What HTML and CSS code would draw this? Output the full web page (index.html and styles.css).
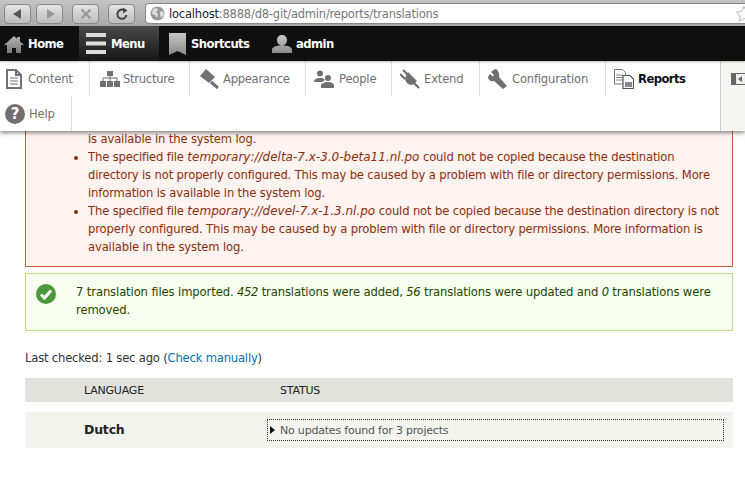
FILE: index.html
```html
<!DOCTYPE html>
<html lang="en">
<head>
  <meta charset="UTF-8" />
  <title>Translations</title>
  <link rel="stylesheet" href="styles.css">
</head>
<body>

<div class="browser">
  <div class="btn"><svg width="14" height="14" viewBox="0 0 14 14"><path d="M10 2v10L2 7z" fill="#555"/></svg></div>
  <div class="btn btn-next"><svg width="14" height="14" viewBox="0 0 14 14"><path d="M4 2v10l8-5z" fill="#999"/></svg></div>
  <div class="btn btn-stop"><svg width="14" height="14" viewBox="0 0 14 14"><path d="M2.500 2.500l9 9M11.500 2.500l-9 9" stroke="#999" stroke-width="2.400"/></svg></div>
  <div class="btn"><svg width="14" height="14" viewBox="0 0 14 14"><path d="M11.500 8a4.600 4.600 0 1 1-2-4.600" fill="none" stroke="#444" stroke-width="2"/><path d="M8 .5l4.500 3-4.500 3z" fill="#444"/></svg></div>
  <div class="address">
    <svg width="15" height="15" viewBox="0 0 15 15"><circle cx="7.500" cy="7.500" r="7" fill="#999"/><path d="M3 3l4-1 1 2-2 2 2 2-1 4-2-3-3-1zM10 6l3-1 1 4-3 3-1-3z" fill="#ddd"/></svg>
    <span class="host">localhost</span><span class="path">:8888/d8-git/admin/reports/translations</span>
    <svg class="star" width="18" height="18" viewBox="0 0 18 18"><path d="M9 1.500l2.300 5 5.400.6-4 3.700 1.100 5.400L9 13.500l-4.800 2.700 1.100-5.400-4-3.700 5.400-.6z" fill="#fff" stroke="#bbb"/></svg>
  </div>
</div>

<div class="toolbar">
  <a class="bar-item bar-home">
    <svg width="20" height="18" viewBox="0 0 20 18">
      <linearGradient id="g-home" x1="0" y1="0" x2="0" y2="1"><stop offset="0" stop-color="#b0b0b0"/><stop offset="1" stop-color="#7c7c7c"/></linearGradient>
      <path d="M10 1L0 10h3v8h5v-5h4v5h5v-8h3l-4-3.600V2h-3v1.700z" fill="url(#g-home)"/>
    </svg>
    Home
  </a>
  <a class="bar-item bar-menu">
    <svg width="20" height="21" viewBox="0 0 20 21"><path d="M0 0h20v4H0zM0 8.500h20v4H0zM0 17h20v4H0z" fill="#dedede"/></svg>
    Menu
  </a>
  <a class="bar-item bar-shortcuts">
    <svg width="17" height="22" viewBox="0 0 17 22">
      <linearGradient id="g-mark" x1="0" y1="0" x2="0" y2="1"><stop offset="0" stop-color="#c4c4c4"/><stop offset="1" stop-color="#8a8a8a"/></linearGradient>
      <path d="M0 0h17v22l-8.500-4L0 22z" fill="url(#g-mark)"/>
    </svg>
    Shortcuts
  </a>
  <a class="bar-item bar-admin">
    <svg width="20" height="18" viewBox="0 0 20 18">
      <linearGradient id="g-user" x1="0" y1="0" x2="0" y2="1"><stop offset="0" stop-color="#c8c8c8"/><stop offset="1" stop-color="#8c8c8c"/></linearGradient>
      <path d="M10 0c3 0 5 2 5 5s-2 5.500-5 5.500S5 8 5 5s2-5 5-5zM0 18v-3c0-3 4-4 7-4.500h6c3 .5 7 1.500 7 4.500v3z" fill="url(#g-user)"/>
    </svg>
    admin
  </a>
</div>

<div class="tray">
  <div class="tray-items">
    <div class="tray-row">
      <a class="tab tab-content">
        <svg width="16" height="20" viewBox="0 0 16 20"><path d="M1 1h9l5 5v13H1z" fill="#fff" stroke="#707070" stroke-width="2"/><path d="M10 1v5h5" fill="none" stroke="#707070" stroke-width="2"/><path d="M4 9h8M4 12h8M4 15h8" stroke="#707070"/></svg>
        Content
      </a>
      <a class="tab tab-structure">
        <svg width="20" height="16" viewBox="0 0 20 16"><path d="M7 0h6v5H7zM0 10h6v6H0zM7 10h6v6H7zM14 10h6v6h-6z" fill="#707070"/><path d="M3 10V7h14v3M10 5v5" fill="none" stroke="#707070"/></svg>
        Structure
      </a>
      <a class="tab tab-appearance">
        <svg width="20" height="20" viewBox="0 0 20 20"><path d="M0 7L6 0l9 8-6 6z" fill="#707070"/><path d="M11 13l7 6" stroke="#707070" stroke-width="3"/></svg>
        Appearance
      </a>
      <a class="tab tab-people">
        <svg width="20" height="18" viewBox="0 0 20 18"><circle cx="6" cy="3.500" r="3" fill="#707070"/><path d="M0 12c0-3 3-4 6-4s4 .5 5 2l-3 2z" fill="#707070"/><circle cx="14" cy="8" r="3" fill="#707070"/><path d="M7 18v-2c0-3 4-4 7-4s6 1 6 4v2z" fill="#707070"/></svg>
        People
      </a>
      <a class="tab tab-extend">
        <svg width="20" height="20" viewBox="0 0 20 20"><path d="M8 3l9 9-3 3c-2 1.500-5 1-7-1s-2.500-5-1-7z" fill="#707070"/><path d="M3 1l5 5M0 5l5 5M14 14l5 5" stroke="#707070" stroke-width="2.200"/></svg>
        Extend
      </a>
      <a class="tab tab-config">
        <svg width="20" height="20" viewBox="0 0 20 20"><path d="M7 0L3 3l3 3-1 1.500L2 5 0 8c0 3 3 5 6 4l9 8 4-3-8-9c1-3-1-8-4-8z" fill="#707070"/></svg>
        Configuration
      </a>
      <a class="tab tab-reports">
        <svg width="20" height="20" viewBox="0 0 20 20"><path d="M.5.500h8l3 3V15H.5z" fill="#fff" stroke="#777"/><path d="M2 6h7M2 8.500h7M2 11h7" stroke="#888"/><path d="M9 6.500h7l3.500 3.500v9.500H9z" fill="#fff" stroke="#555" stroke-width="1.200"/><path d="M11 13h7v5h-7z" fill="#888"/></svg>
        Reports
      </a>
    </div>
    <div class="tray-row">
      <a class="tab tab-help">
        <svg width="20" height="20" viewBox="0 0 20 20"><circle cx="10" cy="10" r="10" fill="#707070"/><text x="10" y="15" text-anchor="middle" class="help-mark">?</text></svg>
        Help
      </a>
    </div>
  </div>
  <div class="tray-toggle">
    <svg width="14" height="14" viewBox="0 0 14 14"><path d="M0 1h14v12H0z" fill="#666"/><path d="M5 2h9v10H5z" fill="#eee"/><path d="M11 4v6L7 7z" fill="#666"/></svg>
  </div>
</div>

<main>
  <div class="messages messages-error">
    <ul>
      <li class="cut">is available in the system log.</li>
      <li>The specified file <em>temporary://delta-7.x-3.0-beta11.nl.po</em> could not be copied because the destination directory is not properly configured. This may be caused by a problem with file or directory permissions. More information is available in the system log.</li>
      <li>The specified file <em>temporary://devel-7.x-1.3.nl.po</em> could not be copied because the destination directory is not properly configured. This may be caused by a problem with file or directory permissions. More information is available in the system log.</li>
    </ul>
  </div>

  <div class="messages messages-status">
    <svg class="check" width="20" height="20" viewBox="0 0 20 20"><circle cx="10" cy="10" r="10" fill="#4a9a3c"/><path d="M5 10.500l3.500 3.500L15 6.500" fill="none" stroke="#fff" stroke-width="3"/></svg>
    <p>7 translation files imported. <em>452</em> translations were added, <em>56</em> translations were updated and <em>0</em> translations were removed.</p>
  </div>

  <p class="checked">Last checked: 1 sec ago (<a href="#">Check manually</a>)</p>

  <div class="table-head">
    <span class="col-lang">Language</span>
    <span>Status</span>
  </div>
  <div class="table-row">
    <span class="col-lang">Dutch</span>
    <div class="status">No updates found for 3 projects</div>
  </div>
</main>

</body>
</html>
```

FILE: styles.css
```css
* { box-sizing: border-box; }
html, body {
  height: 489px;
  overflow: hidden;
}
body {
  margin: 0;
  background: white;
  font-family: "DejaVu Sans", sans-serif;
  font-size: 11.6px;
  letter-spacing: -0.2px;
  color: #333;
}

/* browser window */
.browser {
  height: 26px;
  background: linear-gradient(#c4c4c4, #a9a9a9);
  display: flex;
  align-items: center;
  padding: 1px 0 0 4px;
  gap: 5px;
}
.btn {
  width: 27px;
  height: 20px;
  border: 1px solid #888;
  border-radius: 4px;
  background: linear-gradient(#e4e4e4, #bdbdbd);
  display: flex;
  align-items: center;
  justify-content: center;
}
.btn-next { margin-right: 4px; }
.btn-stop { margin-right: 4px; }
.address {
  flex: 1;
  height: 21px;
  margin-left: 5px;
  background: white;
  border: 1px solid #888;
  border-right: none;
  border-radius: 4px 0 0 4px;
  display: flex;
  align-items: center;
  padding-left: 4px;
  font-size: 11.5px;
  white-space: nowrap;
}
.host {
  margin-left: 4px;
  color: #222;
}
.path { color: #777; }
.star { margin-left: auto; margin-right: -8px; }

/* toolbar */
.toolbar {
  height: 35px;
  background: #0f0f0f;
  display: flex;
  position: relative;
  z-index: 1;
  box-shadow: 0 1px 2px rgba(0,0,0,0.25);
}
.bar-item {
  display: flex;
  align-items: center;
  gap: 5px;
  color: white;
  font-size: 11.6px;
  letter-spacing: -0.55px;
  font-weight: bold;
}
.bar-home { width: 79px; padding-left: 4px; gap: 4px; }
.bar-menu {
  width: 80px;
  padding-left: 7px;
  background: linear-gradient(#4a4a4a, #161616);
}
.bar-shortcuts { width: 103px; padding-left: 10px; }
.bar-admin { padding-left: 10px; gap: 4px; }

/* tray */
.tray {
  height: 70px;
  display: flex;
  background: white;
  position: relative;
  box-shadow: 0 2px 4px rgba(0,0,0,0.45);
}
.tray-items { width: 722px; }
.tray-row {
  height: 35px;
  display: flex;
}
.tab {
  display: flex;
  align-items: center;
  gap: 4px;
  height: 35px;
  padding-left: 10px;
  border-right: 1px solid #ddd;
  color: #707070;
  white-space: nowrap;
}
.tab-content { width: 90px; padding-left: 6px; gap: 6px; }
.tab-structure { width: 100px; gap: 3px; letter-spacing: -0.3px; }
.tab-appearance { width: 116px; gap: 3px; letter-spacing: -0.3px; }
.tab-people { width: 86px; padding-left: 8px; gap: 5px; }
.tab-extend { width: 88px; padding-left: 8px; }
.tab-config { width: 126px; padding-left: 8px; gap: 4px; }
.tab-reports {
  border-right: none;
  padding-left: 8px;
  color: #111;
  font-weight: bold;
  letter-spacing: -0.55px;
}
.tab-help { width: 72px; padding-left: 5px; gap: 4px; }
.help-mark {
  fill: white;
  font-size: 15px;
  font-weight: bold;
}
.tray-toggle {
  flex: 1;
  background: #f5f5f2;
  border-left: 1px solid #ccc;
  padding: 11px 0 0 10px;
}

/* page */
main { padding: 0 12px 0 25px; }
.messages {
  line-height: 18px;
  border: 1px solid;
}
.messages-error {
  display: flow-root;
  background: #fdf3f0;
  border-color: #c9623c;
  border-top: none;
  color: #8c2e0b;
  padding: 0 12px 10px 50px;
  height: 136px;
  letter-spacing: -0.15px;
}
.messages-error em {
  font-size: 12px;
  letter-spacing: 0;
}
.messages ul {
  margin: -1px 0 0;
  padding: 0 0 0 12px;
}
.cut { list-style: none; }
.messages-status {
  margin-top: 6px;
  height: 58px;
  background: #f8fff0;
  border-color: #c0dc80;
  color: #234600;
  display: flex;
  align-items: flex-start;
  padding: 9px 12px 0 10px;
  gap: 20px;
  letter-spacing: -0.12px;
}
.messages-status em {
  font-size: 11.5px;
  letter-spacing: -0.3px;
}
.check { margin-top: 1px; flex-shrink: 0; }
.messages-status p { margin: 0; }
.checked { margin: 18px 0 11px; line-height: 18px; }
a { color: #0071b3; text-decoration: none; }

/* language table */
.table-head {
  height: 24px;
  background: #e1e2dc;
  display: flex;
  align-items: center;
  padding-left: 59px;
  font-size: 11px;
  text-transform: uppercase;
  color: #222;
}
.col-lang { width: 196px; }
.table-row {
  margin-top: 10px;
  height: 36px;
  background: #f3f4ee;
  display: flex;
  align-items: center;
  padding: 0 9px 0 59px;
}
.table-row .col-lang {
  width: 183px;
  font-size: 12.5px;
  font-weight: bold;
  color: #222;
  margin-top: -2px;
}
.status {
  flex: 1;
  height: 22px;
  border: 1px dotted #333;
  display: flex;
  align-items: center;
  padding-left: 12px;
  font-size: 11px;
  color: #555;
  position: relative;
}
.status::before {
  content: "";
  position: absolute;
  left: 2px;
  top: 6px;
  border-left: 5px solid #111;
  border-top: 4px solid transparent;
  border-bottom: 4px solid transparent;
}
```
